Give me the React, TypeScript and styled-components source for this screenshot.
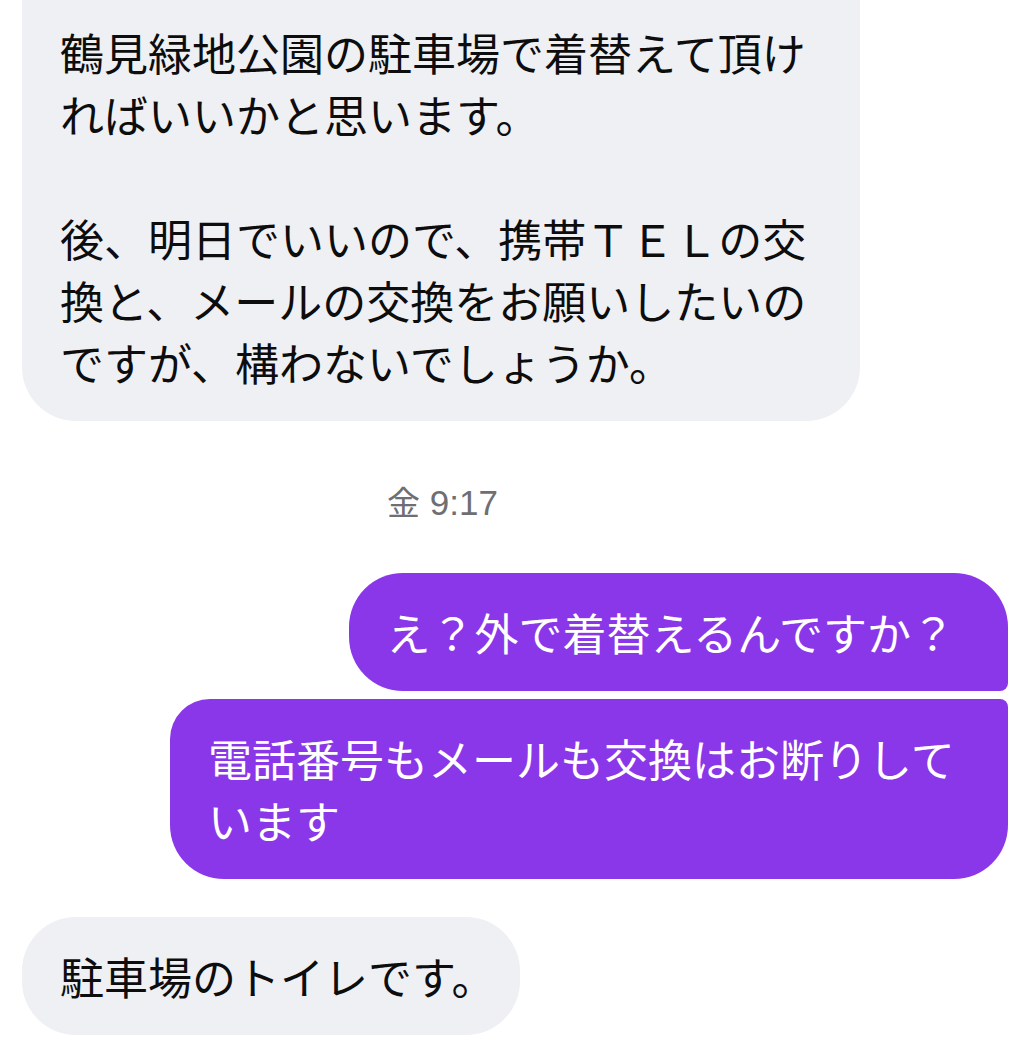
import React from 'react';
import styled, { createGlobalStyle, css } from 'styled-components';

const GlobalStyle = createGlobalStyle`
  html, body {
    margin: 0;
    padding: 0;
    background: #ffffff;
    overflow: hidden;
  }
  body {
    font-family: "Noto Sans CJK JP", "Liberation Sans", sans-serif;
  }
`;

const Thread = styled.div`
  width: 1033px;
  height: 1054px;
  box-sizing: border-box;
  padding: 0 25px 0 22px;
  display: flex;
  flex-direction: column;
  overflow: hidden;
`;

const Row = styled.div<{ $mine?: boolean; $gap?: number }>`
  display: flex;
  justify-content: ${(p) => (p.$mine ? 'flex-end' : 'flex-start')};
  margin-top: ${(p) => p.$gap ?? 0}px;
`;

type Corner = 'single' | 'first' | 'last';

const bigR = 54;
const smallR = 8;

const radius = (mine: boolean, pos: Corner) => {
  if (pos === 'single') return css`border-radius: ${bigR}px;`;
  if (mine) {
    return pos === 'first'
      ? css`border-radius: ${bigR}px ${bigR}px ${smallR}px ${bigR}px;`
      : css`border-radius: 40px ${smallR}px ${bigR}px ${bigR}px;`;
  }
  return pos === 'first'
    ? css`border-radius: ${bigR}px ${bigR}px ${bigR}px ${smallR}px;`
    : css`border-radius: ${smallR}px ${bigR}px ${bigR}px ${bigR}px;`;
};

// $lift: how much of the bubble is scrolled off the top of the view
const Bubble = styled.div<{ $mine?: boolean; $pos?: Corner; $lift?: number; $tail?: number }>`
  max-width: 838px;
  box-sizing: border-box;
  padding: 28px ${(p) => p.$tail ?? 46}px 28px 38px;
  margin-top: ${(p) => -(p.$lift ?? 0)}px;
  padding-top: ${(p) => 28 + (p.$lift ?? 0)}px;
  font-family: "Noto Sans CJK JP", sans-serif;
  font-size: 44px;
  line-height: 62px;
  font-weight: 400;
  color: ${(p) => (p.$mine ? '#ffffff' : '#0d0d0d')};
  background: ${(p) => (p.$mine ? '#8a37ea' : '#eff0f4')};
  ${(p) => radius(!!p.$mine, p.$pos ?? 'single')}
`;

const Stamp = styled.div`
  margin-top: 60px;
  padding-left: 365px;
  height: 40px;
  line-height: 40px;
  font-family: "Liberation Sans", "Noto Sans CJK JP", sans-serif;
  font-size: 35px;
  color: #6e6e73;
`;

const Kanji = styled.span`
  font-family: "Noto Sans CJK JP", sans-serif;
  font-size: 33px;
`;

export default function App() {
  return (
    <>
      <GlobalStyle />
      <Thread>
        <Row $gap={-7}>
          <Bubble $pos="last" $lift={60}>
            鶴見緑地公園の駐車場で着替えて頂ければいいかと思います。
            <br />
            <br />
            後、明日でいいので、携帯ＴＥＬの交換と、メールの交換をお願いしたいのですが、構わないでしょうか。
          </Bubble>
        </Row>

        <Stamp>
          <Kanji>金</Kanji> 9:17
        </Stamp>

        <Row $mine $gap={52}>
          <Bubble $mine $pos="first" $tail={53}>
            え？外で着替えるんですか？
          </Bubble>
        </Row>
        <Row $mine $gap={8}>
          <Bubble $mine $pos="last">電話番号もメールも交換はお断りしています</Bubble>
        </Row>

        <Row $gap={38}>
          <Bubble $tail={24}>駐車場のトイレです。</Bubble>
        </Row>
      </Thread>
    </>
  );
}
